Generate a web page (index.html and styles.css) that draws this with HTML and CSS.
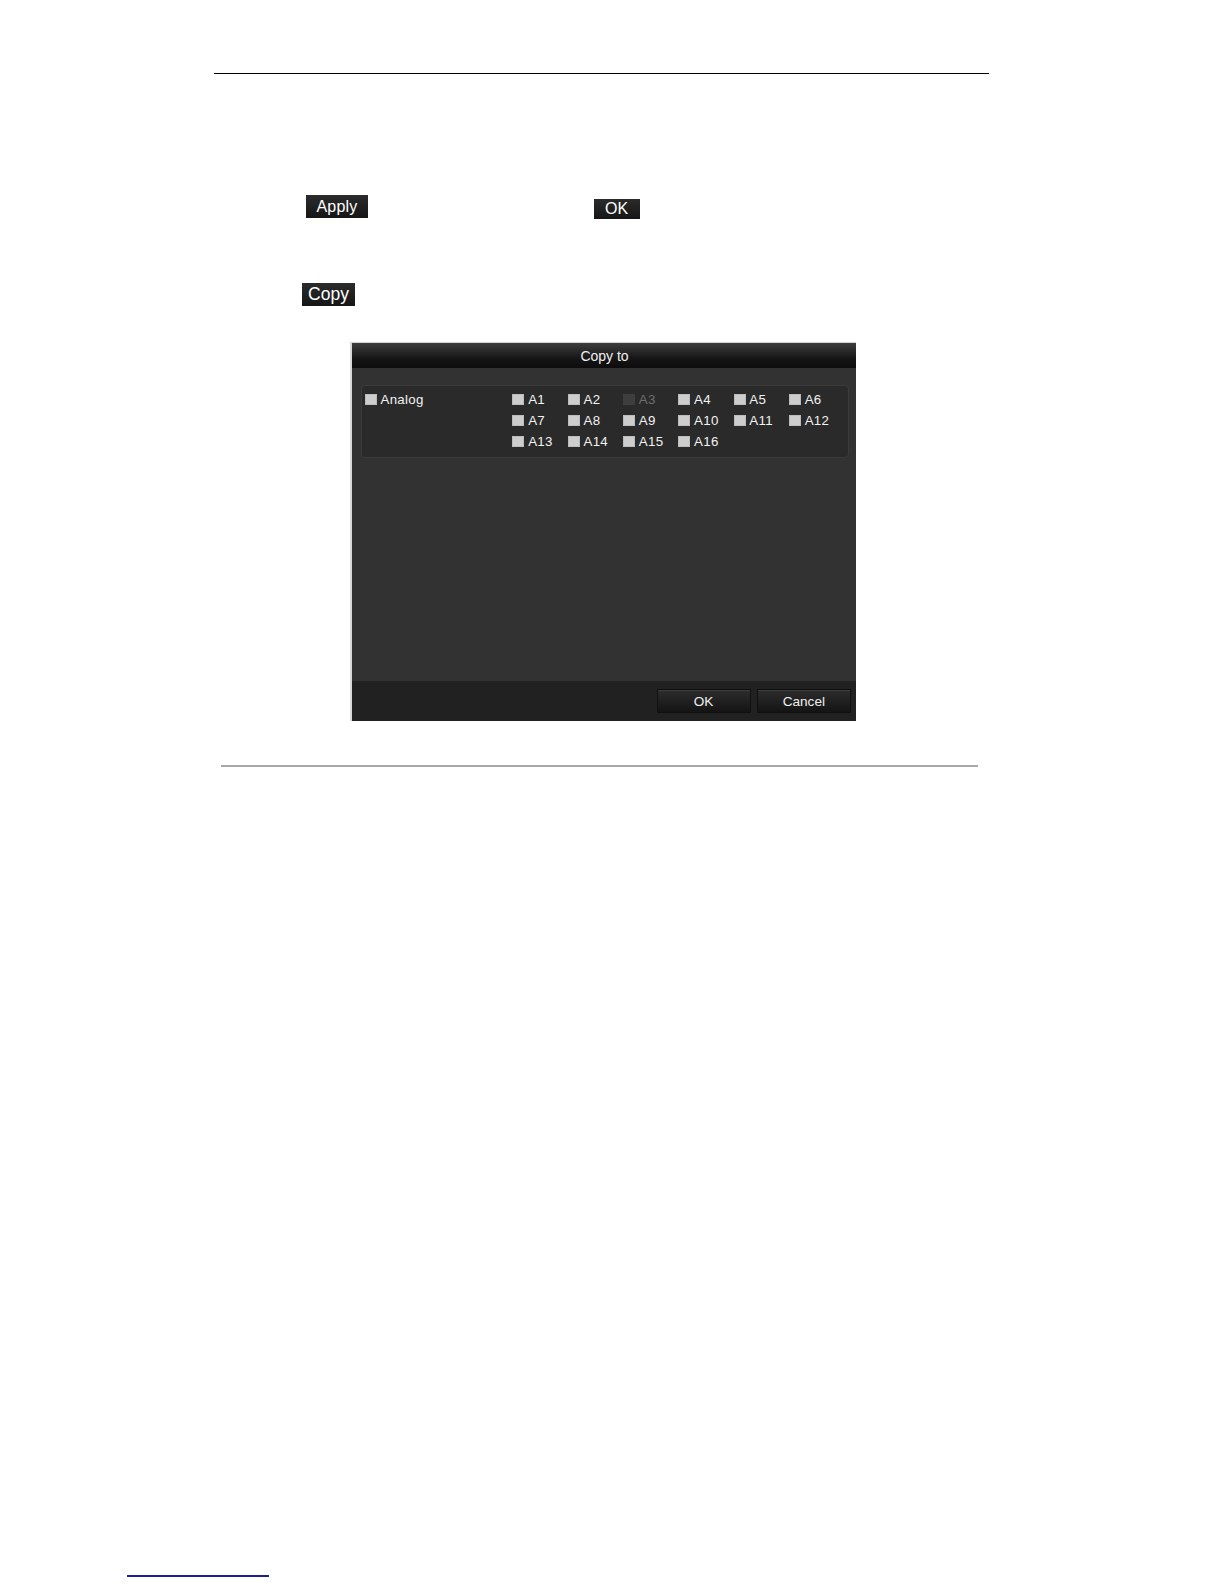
FILE: index.html
```html
<!DOCTYPE html>
<html>
<head>
<meta charset="utf-8">
<link rel="stylesheet" href="styles.css">
</head>
<body>
<div class="page">
  <div class="top-rule"></div>
  <div class="btn-row first">
    <span class="ui-btn apply">Apply</span>
    <span class="ui-btn ok">OK</span>
  </div>
  <div class="btn-row second">
    <span class="ui-btn copy">Copy</span>
  </div>

  <div class="dialog">
    <div class="dlg-title">Copy to</div>
    <div class="dlg-body">
      <div class="panel">
        <div class="group">
          <label class="cb"><span class="box"></span>Analog</label>
        </div>
        <div class="grid">
          <label class="cb"><span class="box"></span>A1</label>
          <label class="cb"><span class="box"></span>A2</label>
          <label class="cb disabled"><span class="box"></span>A3</label>
          <label class="cb"><span class="box"></span>A4</label>
          <label class="cb"><span class="box"></span>A5</label>
          <label class="cb"><span class="box"></span>A6</label>
          <label class="cb"><span class="box"></span>A7</label>
          <label class="cb"><span class="box"></span>A8</label>
          <label class="cb"><span class="box"></span>A9</label>
          <label class="cb"><span class="box"></span>A10</label>
          <label class="cb"><span class="box"></span>A11</label>
          <label class="cb"><span class="box"></span>A12</label>
          <label class="cb"><span class="box"></span>A13</label>
          <label class="cb"><span class="box"></span>A14</label>
          <label class="cb"><span class="box"></span>A15</label>
          <label class="cb"><span class="box"></span>A16</label>
        </div>
      </div>
    </div>
    <div class="dlg-footer">
      <span class="dlg-btn ok-btn">OK</span>
      <span class="dlg-btn cancel-btn">Cancel</span>
    </div>
  </div>

  <div class="bottom-rule"></div>
  <div class="footnote-rule"></div>
</div>
</body>
</html>
```

FILE: styles.css
```css
html, body {
  margin: 0;
  padding: 0;
  background: #ffffff;
}

.page {
  width: 1224px;
  height: 1584px;
  font-family: "Liberation Sans", Arial, sans-serif;
  overflow: hidden;
}

.top-rule {
  margin: 73px 0 0 214px;
  width: 775px;
  height: 1px;
  background: #000;
}

.btn-row {
  display: flex;
  align-items: flex-start;
}

.btn-row.first {
  margin-top: 121px;
  height: 24px;
}

.btn-row.second {
  margin-top: 64px;
  height: 23px;
}

.ui-btn {
  display: flex;
  align-items: center;
  justify-content: center;
  background: linear-gradient(#2b2b2b, #161616);
  color: #fff;
  box-sizing: border-box;
}

.apply {
  margin-left: 306px;
  width: 62px;
  height: 23px;
  font-size: 16px;
  letter-spacing: 0.2px;
}

.ok {
  margin-left: 225.5px;
  margin-top: 4px;
  width: 46px;
  height: 20px;
  font-size: 16px;
}

.copy {
  margin-left: 302px;
  width: 53px;
  height: 23px;
  font-size: 17.5px;
}

.dialog {
  margin: 36px 0 0 349.5px;
  width: 506px;
  height: 379px;
  box-sizing: border-box;
  border-top: 1px solid #d4d4d4;
  border-left: 2px solid #d8d8d8;
  display: flex;
  flex-direction: column;
  background: #333;
}

.dlg-title {
  height: 25px;
  flex: none;
  background: linear-gradient(#3d3d3d 0%, #2a2a2a 30%, #141414 65%, #0d0d0d 100%);
  color: #f0f0f0;
  font-size: 14px;
  display: flex;
  align-items: center;
  justify-content: center;
  padding-left: 2px;
}

.dlg-body {
  height: 313px;
  box-sizing: border-box;
  flex: none;
  background: #323232;
  padding: 17px 6.5px 0 9px;
}

.panel {
  height: 73px;
  box-sizing: border-box;
  background: #2a2a2a;
  border: 1px solid #3b3b3b;
  border-radius: 4px;
  display: flex;
  padding: 7.3px 0 0 3.3px;
}

.group {
  width: 147.7px;
  flex: none;
}

.grid {
  display: grid;
  grid-template-columns: repeat(6, 55.3px);
  grid-auto-rows: 20.7px;
}

.cb {
  display: flex;
  align-items: center;
  height: 13px;
  color: #f2f2f2;
  font-size: 13.3px;
  letter-spacing: 0.3px;
}

.box {
  width: 12px;
  height: 11px;
  background: #cdcdcd;
  border: 1px solid #bcbcbc;
  box-sizing: border-box;
  margin-right: 3.7px;
  flex: none;
}

.cb.disabled {
  color: #6e6e6e;
}

.cb.disabled .box {
  background: #3e3e3e;
  border-color: #3e3e3e;
}

.dlg-footer {
  height: 40px;
  flex: none;
  background: #212121;
  display: flex;
  justify-content: flex-end;
  align-items: flex-start;
  gap: 6.7px;
  padding: 8.3px 5px 0 0;
  box-sizing: border-box;
}

.dlg-btn {
  height: 23.5px;
  box-sizing: border-box;
  background: linear-gradient(#2d2d2d, #141414);
  border: 1px solid #101010;
  box-shadow: inset 0 1px 0 #3b3b3b;
  color: #f0f0f0;
  font-size: 13.6px;
  display: flex;
  align-items: center;
  justify-content: center;
}

.ok-btn {
  width: 94px;
}

.cancel-btn {
  width: 93.3px;
}

.bottom-rule {
  margin: 44px 0 0 221px;
  width: 757px;
  height: 2px;
  background: #a8a8a8;
}

.footnote-rule {
  margin: 808px 0 0 127px;
  width: 142px;
  height: 1.5px;
  background: #1f1f9a;
}
```
